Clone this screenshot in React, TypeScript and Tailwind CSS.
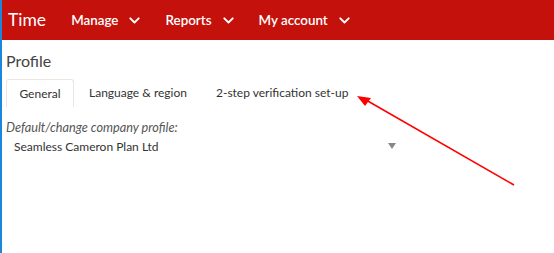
import React from "react";

function Chevron() {
  return (
    <svg width="11" height="7" viewBox="0 0 11 7" className="ml-[11px] mt-[2px]">
      <path d="M1.3 1.3 L5.5 5.5 L9.7 1.3" fill="none" stroke="white" strokeWidth="1.9" strokeLinecap="round" strokeLinejoin="round" />
    </svg>
  );
}

export default function App() {
  return (
    <div className="relative h-[253px] w-[554px] overflow-hidden border-l-2 border-[#1b87dc] bg-white" style={{ fontFamily: "Lato, 'Open Sans', sans-serif" }}>
      <header className="flex h-10 items-center bg-[#c4110b] text-white">
        <div className="ml-[6px] text-[17.5px] leading-none">Time</div>
        <nav className="ml-[25px] flex items-center gap-[25px] text-[13.4px] font-semibold">
          <div className="flex items-center">Manage<Chevron /></div>
          <div className="flex items-center">Reports<Chevron /></div>
          <div className="flex items-center">My account<Chevron /></div>
        </nav>
      </header>
      <main className="px-[4px] pt-[11px] text-[#333]">
        <h1 className="text-[16px] leading-5 text-[#444]">Profile</h1>
        <div className="mt-[8px] flex text-[12px] text-[#333]">
          <div className="flex h-[28px] w-[68px] items-center justify-center rounded-t-[3px] border border-b-0 border-[#efe4e4]">General</div>
          <div className="flex h-[28px] items-center pl-[15px] pr-[29px]">Language &amp; region</div>
          <div className="flex h-[28px] items-center">2-step verification set-up</div>
        </div>
        <div className="mt-[12px] text-[12.7px] italic leading-4 text-[#555]">Default/change company profile:</div>
        <div className="mt-[4px] flex w-[390px] items-center justify-between pl-[8px] text-[12px] leading-4 text-[#333]">
          <span>Seamless Cameron Plan Ltd</span>
          <svg width="8" height="6" viewBox="0 0 8 6" className="mb-[2px]">
            <path d="M0 0 L8 0 L4 6 Z" fill="#888" />
          </svg>
        </div>
      </main>
      <svg className="pointer-events-none absolute left-0 top-0" width="554" height="253" viewBox="0 0 554 253" style={{ marginLeft: -2 }}>
        <line x1="514" y1="185" x2="366" y2="100" stroke="#f00" strokeWidth="1.6" />
        <path d="M357 96 L371 98 L365 106 Z" fill="#f00" />
      </svg>
    </div>
  );
}
